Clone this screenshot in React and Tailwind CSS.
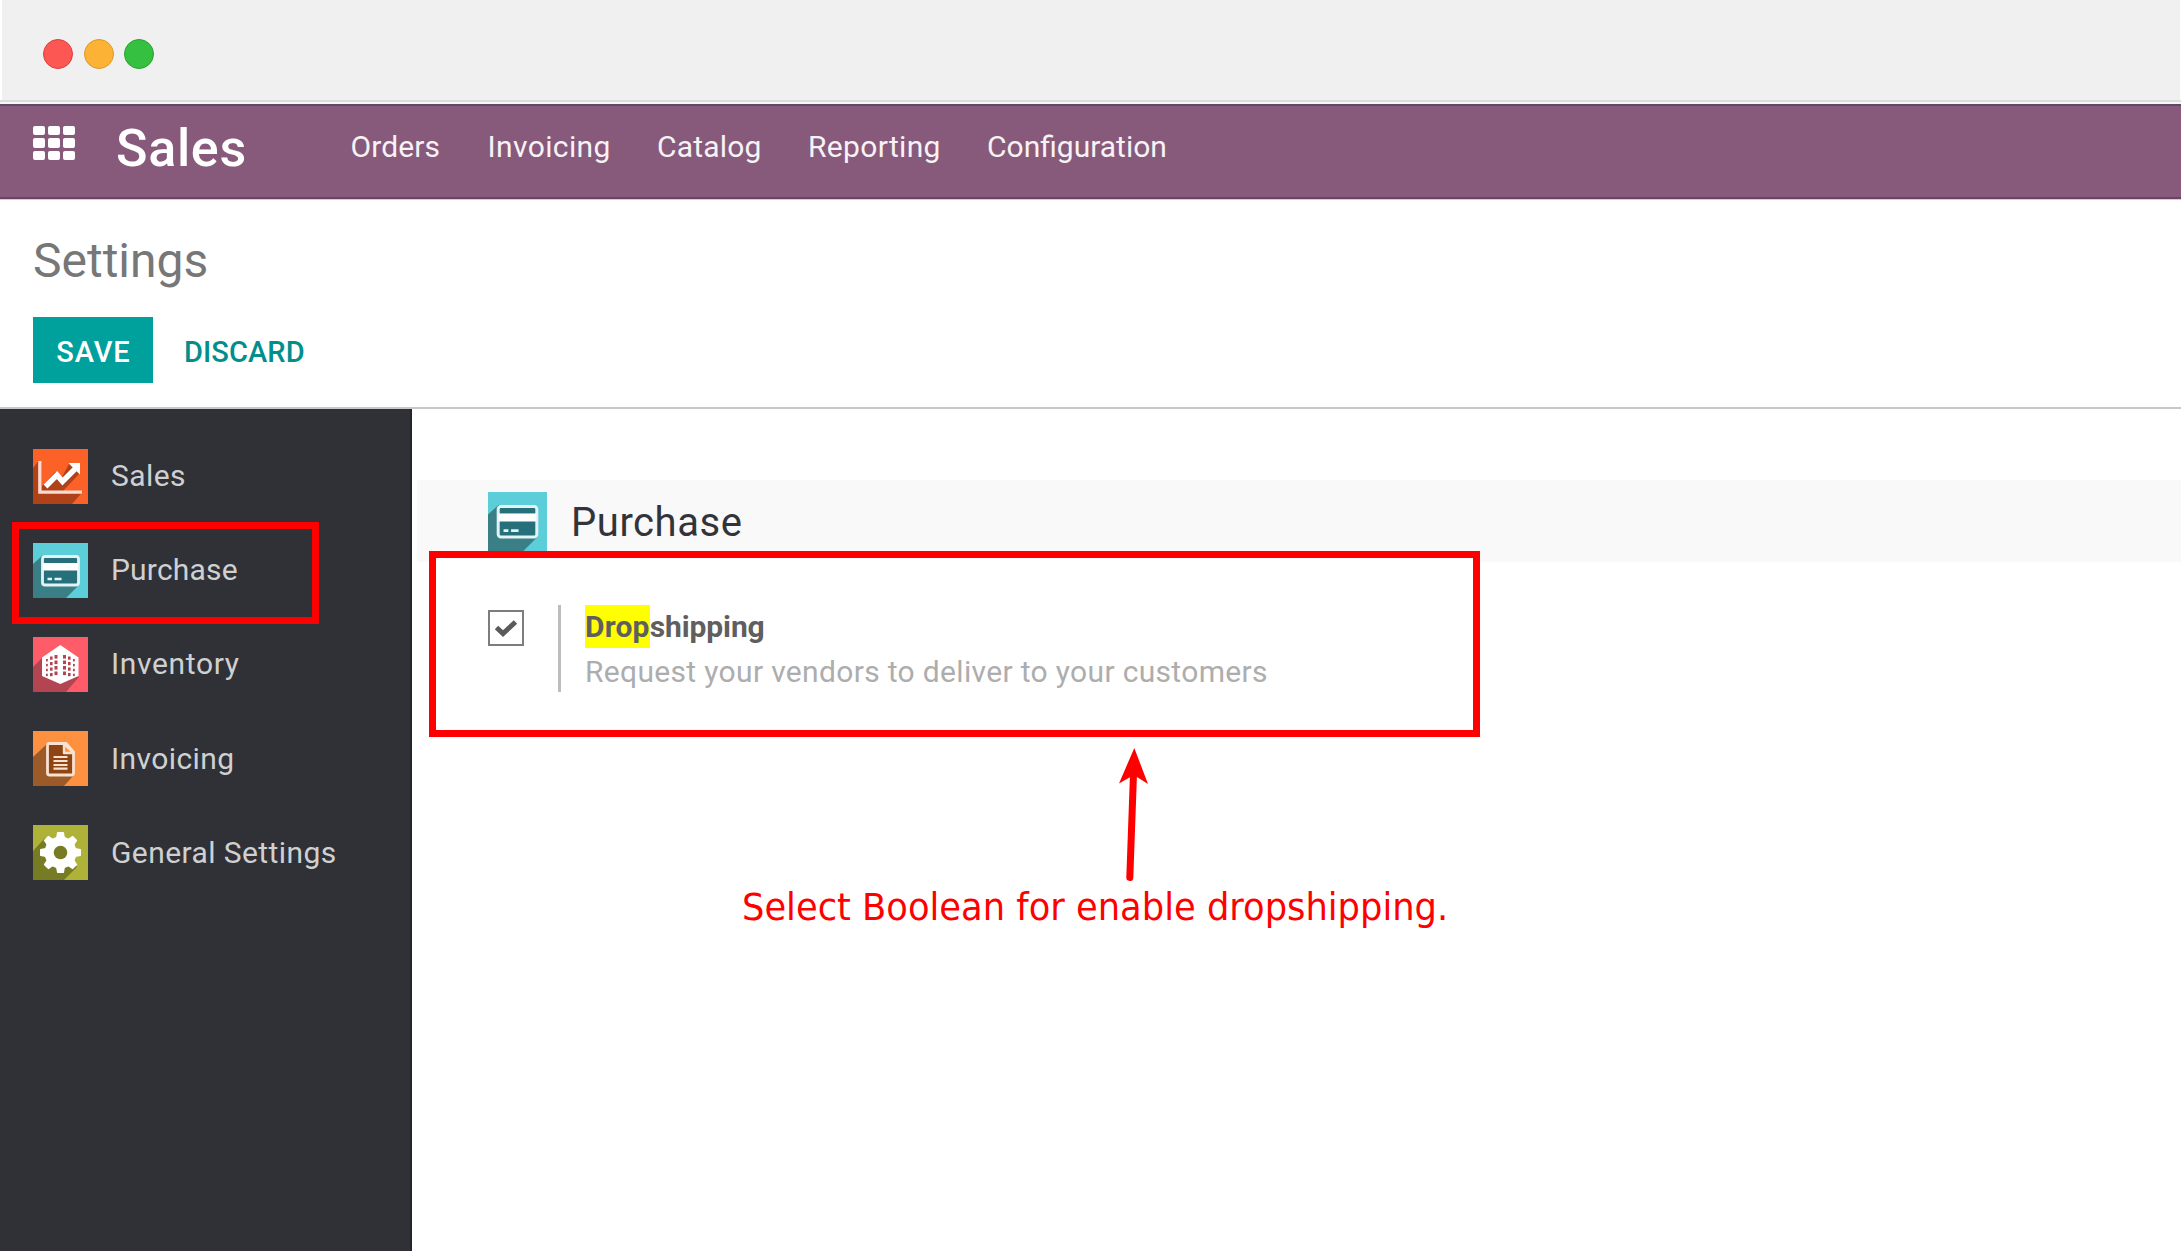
import React from "react";

const MENU = [
  { label: "Orders", cls: "w-[137px] tracking-[0.1px]" },
  { label: "Invoicing", cls: "w-[169.5px] tracking-[0.38px]" },
  { label: "Catalog", cls: "w-[151px] tracking-[0.2px]" },
  { label: "Reporting", cls: "w-[179px] tracking-[0.33px]" },
  { label: "Configuration", cls: "w-[190px]" },
];

function Tile({ bg, shade, children, className }) {
  return (
    <svg viewBox="0 0 55 55" className={className}>
      <rect width="55" height="55" fill={bg} />
      <path d={shade.d} fill={shade.fill} />
      {children}
    </svg>
  );
}

function SalesIcon({ className }) {
  return (
    <Tile className={className} bg="#fc6127" shade={{ d: "M0 19 L5.5 12 V43 H9 V37 L22 23 L29 28 L36 15 L46 25 L29.5 42.5 H50 L39 55 H0 Z", fill: "#b0421a" }}>
      <path d="M6.8 12 V43.2 H49" fill="none" stroke="#f9dcd2" strokeWidth="3.2" />
      <path d="M12.5 37.5 L24 26 L29.5 32.5 L42 20" fill="none" stroke="#fff" strokeWidth="5.4" />
      <path d="M35.5 14 H47 V25.5 Z" fill="#fff" />
    </Tile>
  );
}

function CardIcon({ className }) {
  return (
    <Tile className={className} bg="#5bced9" shade={{ d: "M0 21 L10 12 L46 42 L33 55 H0 Z", fill: "#3a7f86" }}>
      <rect x="9.5" y="13.5" width="36" height="28.5" rx="2.5" fill="#25707a" stroke="#e3f3f5" strokeWidth="2.8" />
      <rect x="10" y="20" width="35" height="7.5" fill="#fff" />
      <path d="M14.5 36 h4.5 M21.5 36 h7" stroke="#e3f3f5" strokeWidth="2.6" />
    </Tile>
  );
}

function InventoryIcon({ className }) {
  const rows = [20, 25.5, 31, 36.5];
  return (
    <Tile className={className} bg="#fd5c68" shade={{ d: "M0 30 L10 20 L46 40 L33 55 H0 Z", fill: "#b34452" }}>
      <path d="M27.3 8 L45.5 20.5 V39 L27.3 47 L9 39 V20.5 Z" fill="#fff" />
      {rows.map((y, i) => (
        <g key={y} fill="#b34452">
          <rect x="21.5" y={y - 2} width="3" height="3.6" />
          <rect x="17" y={y - 0.5} width="2.6" height="3.2" />
          <rect x="13" y={y + 2 - i * 0.6} width="1.8" height="2.4" />
          <rect x="30" y={y - 2} width="3" height="3.6" />
          <rect x="35" y={y - 0.5} width="2.6" height="3.2" />
          <rect x="40" y={y + 2 - i * 0.6} width="1.8" height="2.4" />
        </g>
      ))}
    </Tile>
  );
}

function InvoiceIcon({ className }) {
  return (
    <Tile className={className} bg="#fe9140" shade={{ d: "M0 26 L14 13 L41 44 L31 55 H0 Z", fill: "#9c5a29" }}>
      <path d="M16.5 12.5 H33 L40.5 21 V42 a2 2 0 0 1 -2 2 H16.5 a2 2 0 0 1 -2 -2 V14.5 a2 2 0 0 1 2 -2 Z" fill="#8e4513" stroke="#f9e1cf" strokeWidth="2.8" />
      <path d="M31 13 V22 H40.5 Z" fill="#fe9140" stroke="#f9e1cf" strokeWidth="2.4" strokeLinejoin="round" />
      <path d="M20.5 26 H34.5 M20.5 30 H34.5 M20.5 34 H34.5 M20.5 37.6 H34.5" stroke="#f9e1cf" strokeWidth="2.2" />
    </Tile>
  );
}

function GearIcon({ className }) {
  const teeth = [0, 45, 90, 135, 180, 225, 270, 315];
  return (
    <Tile className={className} bg="#aeb239" shade={{ d: "M0 26 L12 13 L44 42 L31 55 H0 Z", fill: "#777b24" }}>
      <circle cx="27.5" cy="27.5" r="16" fill="#fff" />
      {teeth.map((a) => (
        <path key={a} d="M22.8 14 L24 7.5 Q24.2 7 25 7 H30 Q30.8 7 31 7.5 L32.2 14 Z" fill="#fff" transform={`rotate(${a} 27.5 27.5)`} />
      ))}
      <circle cx="27.5" cy="27.5" r="6.8" fill="#777b24" />
    </Tile>
  );
}

const APPS = [
  { label: "Sales", Icon: SalesIcon, cls: "tracking-[0.4px]" },
  { label: "Purchase", Icon: CardIcon, cls: "tracking-[0.18px]", marked: true },
  { label: "Inventory", Icon: InventoryIcon, cls: "tracking-[0.65px]" },
  { label: "Invoicing", Icon: InvoiceIcon, cls: "tracking-[0.4px]" },
  { label: "General Settings", Icon: GearIcon, cls: "tracking-[0.42px]" },
];

export default function App() {
  return (
    <div className="flex h-[1251px] w-[2181px] flex-col overflow-hidden bg-white font-['Roboto',sans-serif]">
      <div className="flex h-[100px] shrink-0 items-center gap-[10.5px] border-r border-l-2 border-white bg-[#f0f0f0] pt-[8px] pl-[41px]">
        <span className="size-[30px] rounded-full border-[1.5px] border-[#de3d3a] bg-[#fc5753]" />
        <span className="size-[30px] rounded-full border-[1.5px] border-[#da9a2b] bg-[#fcb234]" />
        <span className="size-[30px] rounded-full border-[1.5px] border-[#27a22d] bg-[#36c041]" />
      </div>
      <div className="h-[4px] shrink-0 border-t-2 border-[#dcdcdc] bg-[#f4f7f6]" />

      <header className="flex h-[95px] shrink-0 items-center border-t-2 border-b-2 border-t-[#5a4c68] border-b-[#6b4560] bg-[#875a7b] pl-[33px] text-[#f6f2f5]">
        <div className="mb-[17px] grid grid-cols-3 gap-x-[3px] gap-y-[3px]">
          {Array.from({ length: 9 }, (_, i) => (
            <span key={i} className="h-[9.5px] w-[12px] rounded-[2px] bg-white" />
          ))}
        </div>
        <h1 className="mb-[5px] ml-[41px] w-[234.5px] text-[52px] font-medium leading-none tracking-[0.7px] text-white">Sales</h1>
        <nav className="mb-[10px] flex text-[30px] leading-none">
          {MENU.map((m) => (
            <span key={m.label} className={m.cls + " whitespace-nowrap"}>{m.label}</span>
          ))}
        </nav>
      </header>
      <div className="h-px shrink-0 bg-[#d8c9d4]" />

      <section className="flex h-[209px] shrink-0 flex-col border-b-2 border-[#c8c8c8] pl-[33px]">
        <h2 className="mt-[36px] text-[48px] leading-[50px] text-[#777]">Settings</h2>
        <div className="mt-[31px] flex items-center text-[29px] font-medium">
          <button className="h-[66px] w-[120px] bg-[#00a09d] pt-[5px] pl-px tracking-[0.9px] text-white">SAVE</button>
          <button className="ml-[31px] pt-[5px] tracking-[0.1px] text-[#008f8c]">DISCARD</button>
        </div>
      </section>

      <main className="flex min-h-0 flex-1">
        <aside className="flex w-[412px] shrink-0 flex-col border-r-2 border-[#24262b] bg-[#2f3136] pt-[20px]">
          {APPS.map(({ label, Icon, marked, cls }) => (
            <div key={label} className="relative flex h-[94.2px] shrink-0 items-center pl-[33px] text-[30px] text-[#cfd0d2]">
              <Icon className="size-[55px]" />
              <span className={cls + " mb-px ml-[23px]"}>{label}</span>
              {marked && <span className="absolute top-[-1px] left-[12px] h-[102px] w-[307px] border-[7px] border-[#ff0000]" />}
            </div>
          ))}
        </aside>

        <div className="flex-1 pt-[71px] pl-[5px]">
          <div className="flex h-[82px] items-center bg-[#f9f9f9] pl-[71px]">
            <CardIcon className="size-[59px]" />
            <span className="mt-[4px] ml-[24px] text-[40px] leading-none tracking-[0.55px] text-[#33343a]">Purchase</span>
          </div>
          <div className="relative -mt-[11px] ml-[12px] flex h-[186px] w-[1051px] border-[7px] border-[#ff0000] bg-white pt-[47px] pl-[52px]">
            <span className="mt-[5px] flex size-[36px] items-center justify-center border-2 border-[#7d7d7d]">
              <svg viewBox="0 0 24 18" className="h-[18px] w-[24px]">
                <path d="M2.5 8.5 L9 14.5 L21.5 3" fill="none" stroke="#5a5a5a" strokeWidth="5" />
              </svg>
            </span>
            <div className="ml-[34px] h-[87px] border-l-[3px] border-[#bdbdbd] pl-[24px] text-[30px]">
              <div className="h-[43px] leading-[43px] font-bold tracking-[-0.1px] text-[#5f5f5f]"><mark className="inline-block bg-[#ffff00] tracking-[0.2px] text-inherit">Drop</mark>shipping</div>
              <div className="h-[44px] leading-[48px] tracking-[0.33px] whitespace-nowrap text-[#adadad]">Request your vendors to deliver to your customers</div>
            </div>
          </div>
          <svg viewBox="0 0 32 136" className="mt-[11px] ml-[700px] h-[136px] w-[32px]">
            <path d="M16.5 26 L12.8 129.5" stroke="#ff0000" strokeWidth="7" strokeLinecap="round" />
            <path d="M17.3 0 L31 36 L16.8 27 L2 35.5 Z" fill="#ff0000" />
          </svg>
          <p className="ml-[325px] w-max origin-left scale-x-[0.954] text-[37px] leading-[48px] whitespace-nowrap text-[#ff0000] font-['DejaVu_Sans',sans-serif]">Select Boolean for enable dropshipping.</p>
        </div>
      </main>
    </div>
  );
}
